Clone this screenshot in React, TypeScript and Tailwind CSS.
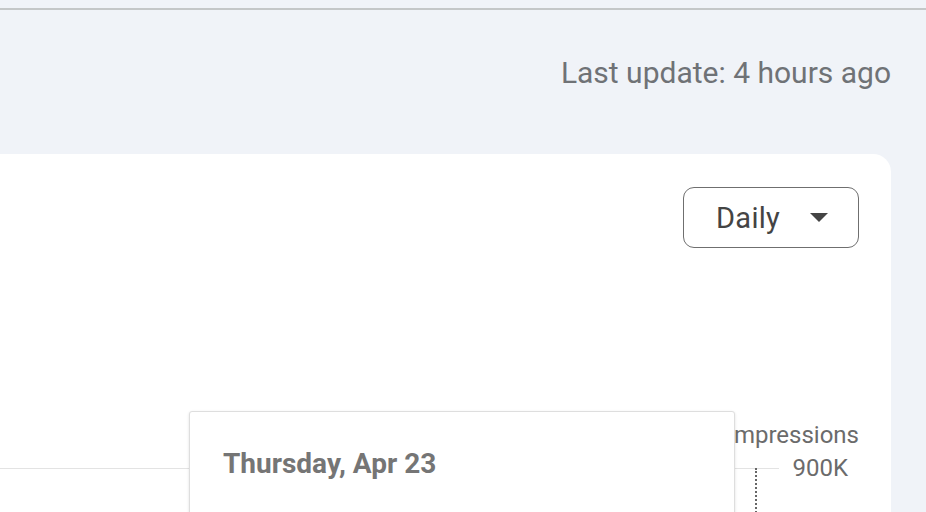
export default function App() {
  return (
    <div className="w-[926px] h-[512px] overflow-hidden bg-[#f0f3f8] font-['Roboto',sans-serif]">
      <div className="pt-2">
        <div className="h-[2px] bg-[#c4c7c8]" />
      </div>
      <div className="h-[144px] pt-[46px] pr-[35px] flex justify-end">
        <span className="text-[30px] leading-[34px] text-[#6f7276]">Last update: 4 hours ago</span>
      </div>
      <div className="relative h-[358px] mr-[35px] bg-white rounded-tr-[18px]">
        <div className="flex justify-end pt-[33px] pr-[32px]">
          <button className="flex items-center w-[176px] h-[61px] pl-[32px] border-[1.5px] border-[#6f6f6f] rounded-[11px]">
            <span className="text-[29px] leading-[32px] tracking-[0.3px] text-[#444]">Daily</span>
            <svg className="ml-[30px]" width="18" height="9" viewBox="0 0 18 9">
              <path d="M0 0 L18 0 L9 9 Z" fill="#444" />
            </svg>
          </button>
        </div>
        <div className="relative mt-[173px]">
          <div className="flex justify-end pr-[32px]">
            <span className="text-[24px] leading-[28px] text-[#6b6b6b]">Impressions</span>
          </div>
          <div className="relative flex items-center mt-[5px] h-[28px]">
            <div className="flex-1 h-px bg-[#e3e3e3]" />
            <span className="ml-[13px] pr-[43px] text-[24px] leading-[28px] text-[#6b6b6b]">900K</span>
            <div className="absolute left-[755px] top-[14px] h-[60px] border-l-2 border-dotted border-[#666]" />
          </div>
          <div className="absolute left-[189px] top-[-10px] w-[546px] h-[120px] bg-white border border-[#dedede] rounded-[3px] shadow-[0_1px_3px_rgba(0,0,0,0.12)] pl-[33px] pt-[36px]">
            <span className="text-[28px] leading-[32px] font-bold text-[#757575]">Thursday, Apr 23</span>
          </div>
        </div>
      </div>
    </div>
  );
}
